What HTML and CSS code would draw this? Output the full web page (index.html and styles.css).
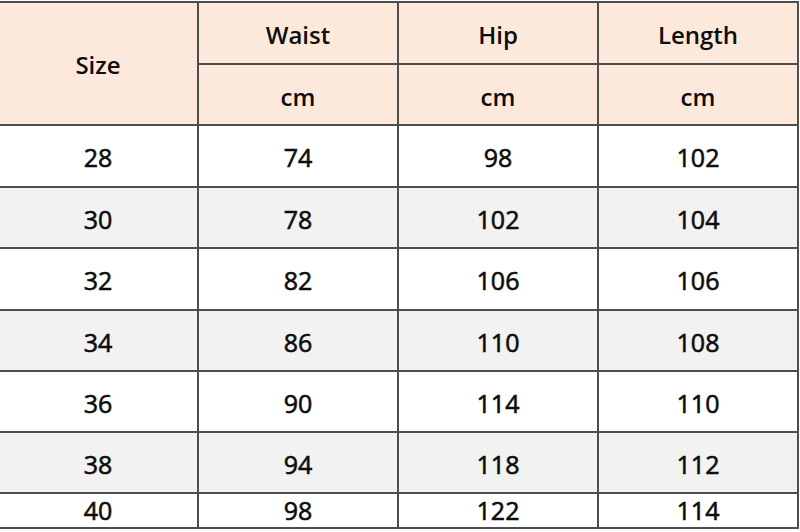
FILE: index.html
```html
<!DOCTYPE html>
<html lang="en">
<head>
<meta charset="utf-8">
<title>Size Chart</title>
<link rel="stylesheet" href="styles.css">
</head>
<body>
<div class="frame">
<table class="chart">
  <colgroup><col class="c"><col class="c"><col class="c"><col class="c"></colgroup>
  <thead>
    <tr class="h1"><th rowspan="2" class="size">Size</th><th>Waist</th><th>Hip</th><th>Length</th></tr>
    <tr class="h2"><th class="unit">cm</th><th class="unit">cm</th><th class="unit">cm</th></tr>
  </thead>
  <tbody>
    <tr class="r a"><td>28</td><td>74</td><td>98</td><td>102</td></tr>
    <tr class="r b"><td>30</td><td>78</td><td>102</td><td>104</td></tr>
    <tr class="r a t"><td>32</td><td>82</td><td>106</td><td>106</td></tr>
    <tr class="r b"><td>34</td><td>86</td><td>110</td><td>108</td></tr>
    <tr class="r a"><td>36</td><td>90</td><td>114</td><td>110</td></tr>
    <tr class="r b"><td>38</td><td>94</td><td>118</td><td>112</td></tr>
    <tr class="r a last"><td>40</td><td>98</td><td>122</td><td>114</td></tr>
  </tbody>
</table>
</div>
</body>
</html>
```
FILE: styles.css
```css
html, body {
  margin: 0;
  padding: 0;
  background: #ffffff;
}
.frame {
  width: 800px;
  height: 532px;
  overflow: hidden;
  background: #fff;
}
.chart {
  border-collapse: collapse;
  table-layout: fixed;
  width: 802px;
  margin: 1px 0 0 -3px;
  font-family: "Open Sans", "Noto Sans", "Liberation Sans", sans-serif;
  color: #0d0d0d;
}
.c { width: 200px; }
.chart th, .chart td {
  border: 2px solid #4d4d4d;
  text-align: center;
  padding: 0;
}
.chart th {
  background: #fde9db;
  font-weight: 600;
  font-size: 24px;
  padding-top: 2px;
}
.chart th.size { padding-top: 2px; }
.chart th.unit { padding-top: 4px; }
.h1 { height: 62px; }
.h2 { height: 61px; }
.chart td {
  font-size: 25px;
  font-weight: normal;
  -webkit-text-stroke: 0.6px #0d0d0d;
  padding-top: 2px;
}
.r { height: 61px; }
.r.t { height: 62px; }
.a td { background: #ffffff; }
.b td { background: #f2f2f2; }
.r:first-child { height: 62px; }
.last { height: 35px; }
.last td { padding-top: 0; line-height: 31px; }
```
